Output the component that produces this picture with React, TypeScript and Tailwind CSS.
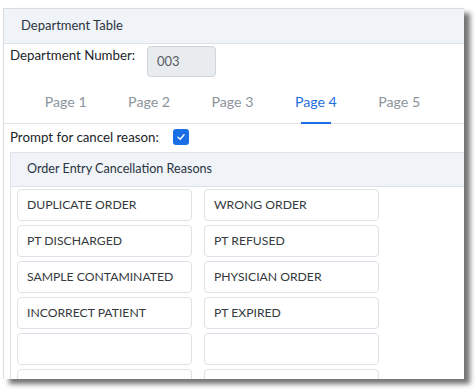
import React from "react";

const reasons: [string, string][] = [
  ["DUPLICATE ORDER", "WRONG ORDER"],
  ["PT DISCHARGED", "PT REFUSED"],
  ["SAMPLE CONTAMINATED", "PHYSICIAN ORDER"],
  ["INCORRECT PATIENT", "PT EXPIRED"],
  ["", ""],
  ["", ""],
];

const tabs = ["Page 1", "Page 2", "Page 3", "Page 4", "Page 5"];

export default function App() {
  return (
    <div
      className="w-[476px] h-[392px] bg-white overflow-hidden pt-[8px] pl-[3px]"
      style={{ fontFamily: "Lato, 'Open Sans', sans-serif" }}
    >
      <div className="w-[461px] h-[371px] bg-white border-l border-t border-[#d9dde2] overflow-hidden shadow-[6px_5px_5px_rgba(0,0,0,0.55)] flex flex-col">
        {/* Header */}
        <div className="h-[35px] shrink-0 bg-[#f0f3f7] border-b border-[#dde2e8] flex items-center pl-[17px] text-[13px] text-[#2a3340]">
          Department Table
        </div>

        {/* Department Number */}
        <div className="flex items-start pl-[6px] pt-[2px] h-[33px] shrink-0">
          <div className="text-[13.3px] leading-[18px] text-[#212529] mt-[0px] w-[137px]">Department Number:</div>
          <div className="w-[69px] h-[31px] bg-[#e9ecef] border border-[#ced4da] rounded-[4px] flex items-center pl-[9px] text-[13px] text-[#555b62]">
            003
          </div>
        </div>

        {/* Tabs */}
        <div className="h-[47px] shrink-0 border-b border-[#e1e4e8] flex pl-[20px] pt-[6px]">
          {tabs.map((t, i) => (
            <div
              key={t}
              className="w-[83.4px] h-[40px] flex flex-col items-center justify-between"
            >
              <div
                className={
                  i === 3
                    ? "text-[14.2px] text-[#1f6fde] pt-[8px]"
                    : "text-[14.2px] text-[#8c949c] pt-[8px]"
                }
              >
                {t}
              </div>
              {i === 3 ? (
                <div className="w-[30px] h-[2px] bg-[#1a6fe6] mb-[-1px]" />
              ) : null}
            </div>
          ))}
        </div>

        {/* Prompt */}
        <div className="h-[28px] shrink-0 flex items-start pt-[5px] pl-[6px]">
          <span className="text-[13.3px] leading-[16px] text-[#212529]">Prompt for cancel reason:</span>
          <span className="ml-[14px] w-[16px] h-[16px] rounded-[3px] bg-[#1a6fe6] flex items-center justify-center">
            <svg width="10" height="10" viewBox="0 0 10 10">
              <path d="M2 5.2 L4.2 7.3 L8 2.8" stroke="white" strokeWidth="1.4" fill="none" strokeLinecap="round" strokeLinejoin="round" />
            </svg>
          </span>
        </div>

        {/* Inner panel */}
        <div className="ml-[6px] flex-1 border-l border-t border-[#dfe3e8] flex flex-col">
          <div className="h-[34px] shrink-0 bg-[#f0f3f7] border-b border-[#dde2e8] flex items-center pl-[16px] text-[12.6px] text-[#2a3340]">
            Order Entry Cancellation Reasons
          </div>
          <div className="pl-[6px] pt-[2px] grid grid-cols-[175px_175px] gap-x-[12px] gap-y-[4px]">
            {reasons.flatMap((r, i) =>
              r.map((v, j) => (
                <div
                  key={`${i}-${j}`}
                  className="h-[32px] border border-[#dee2e6] rounded-[4px] bg-white flex items-center pl-[9px] text-[12.2px] text-[#343a40]"
                >
                  {v}
                </div>
              ))
            )}
          </div>
        </div>
      </div>
    </div>
  );
}
